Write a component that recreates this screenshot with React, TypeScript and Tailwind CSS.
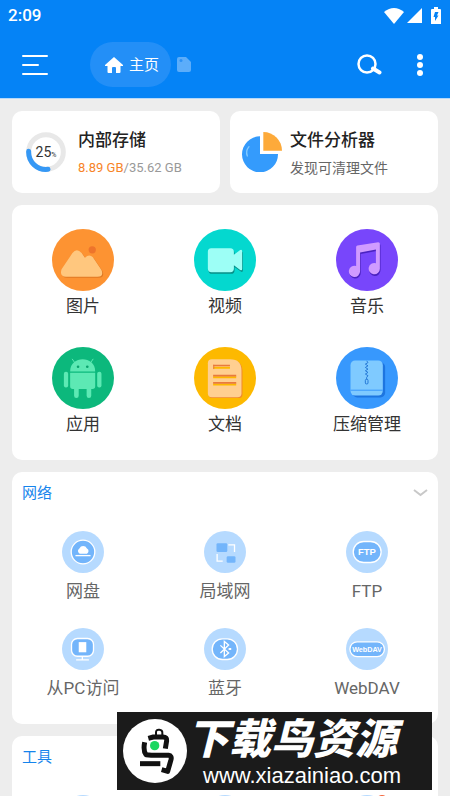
import type { ReactNode } from "react";

type Item = { label: string; icon: ReactNode };

function Disc({ color, children }: { color: string; children?: ReactNode }) {
  return (
    <svg viewBox="0 0 188 188" className="size-[62px]" aria-hidden="true">
      <circle cx="94" cy="94" r="94" fill={color} />
      {children}
    </svg>
  );
}

function PaleDisc({ children }: { children?: ReactNode }) {
  return (
    <svg viewBox="0 0 128 128" className="size-[42px]" aria-hidden="true">
      <circle cx="64" cy="64" r="64" fill="#b6daff" />
      {children}
    </svg>
  );
}

const mountain =
  "M29 122 62 73Q75 56 90 73L100 87Q113 74 124 86L150 124Q158 145 138 145H42Q22 143 29 122Z";
const camera =
  "M52 58H110Q121 58 121 69V78L140 64Q146 61 146 68V121Q146 128 140 124L121 110V120Q121 131 110 131H53Q42 131 42 120V69Q42 58 52 58Z";
const note =
  "M61 55Q61 51 65 50L128 40Q133 40 133 45V120A17 17 0 1 1 121 104V62L73 71V128A17 17 0 1 1 61 112Z";
const sheet =
  "M54 37H110Q144 37 144 72V140Q144 152 132 152H54Q42 152 42 140V49Q42 37 54 37Z";

const categories: Item[] = [
  {
    label: "图片",
    icon: (
      <Disc color="#fd9332">
        <circle cx="122" cy="63" r="11" fill="#ee742b" />
        <path d={mountain} fill="#e07a25" transform="translate(3 3)" />
        <path d={mountain} fill="#ffc77e" />
      </Disc>
    ),
  },
  {
    label: "视频",
    icon: (
      <Disc color="#04d8cf">
        <path d={camera} fill="#078f88" transform="translate(2 5)" />
        <path d={camera} fill="#9dfff6" />
      </Disc>
    ),
  },
  {
    label: "音乐",
    icon: (
      <Disc color="#7846fb">
        <path d={note} fill="#4b22c0" transform="translate(2 5)" />
        <path d={note} fill="#d09bff" />
      </Disc>
    ),
  },
  {
    label: "应用",
    icon: (
      <Disc color="#0cb87c">
        <g fill="#5de9b4">
          <path d="M55 74C55 25 131 25 131 74Z" />
          <path d="M55 78H131V119Q131 127 123 127H119V148A7 7 0 0 1 105 148V127H81V148A7 7 0 0 1 67 148V127H63Q55 127 55 119Z" />
          <rect x="36" y="75" width="13" height="48" rx="6" />
          <rect x="137" y="75" width="13" height="48" rx="6" />
        </g>
        <path d="M61 36 70 49M125 36 116 49" stroke="#5de9b4" strokeWidth="3" />
        <circle cx="79" cy="60" r="4" fill="#0aa36d" />
        <circle cx="107" cy="60" r="4" fill="#0aa36d" />
      </Disc>
    ),
  },
  {
    label: "文档",
    icon: (
      <Disc color="#fdb900">
        <path d={sheet} fill="#f08a2c" transform="translate(3 3)" />
        <path d={sheet} fill="#ffcf90" />
        <path d="M58 63H109M58 92H128M58 114H128" stroke="#fdb900" strokeWidth="6" />
        <path d="M58 56H109M58 87H128M58 109H128" stroke="#e97a3c" strokeWidth="5" />
        <path d="M60 54V67" stroke="#e97a3c" strokeWidth="3" />
      </Disc>
    ),
  },
  {
    label: "压缩管理",
    icon: (
      <Disc color="#3798fd">
        <rect x="50" y="47" width="99" height="106" rx="14" fill="#1d75e0" />
        <rect x="44" y="41" width="98" height="106" rx="14" fill="#7fcaff" />
        <path d="M44 131H142" stroke="#3798fd" strokeWidth="3" />
        <path
          d="M93 42 97 47 89 52 97 57 89 62 97 67 89 72 97 77 89 82 97 87 93 92V98"
          fill="none"
          stroke="#2377d6"
          strokeWidth="3"
        />
        <rect x="89" y="98" width="8" height="14" rx="3" fill="none" stroke="#2377d6" strokeWidth="3" />
      </Disc>
    ),
  },
];

const network: Item[] = [
  {
    label: "网盘",
    icon: (
      <PaleDisc>
        <circle cx="64" cy="64" r="36" fill="#73b5fb" stroke="#fff" strokeWidth="4" />
        <path
          d="M54 69A9 9 0 0 1 53 53A13 13 0 0 1 76 53A9 9 0 0 1 76 69Z"
          fill="#fff"
        />
        <path d="M41 75H87" stroke="#fff" strokeWidth="4" />
      </PaleDisc>
    ),
  },
  {
    label: "局域网",
    icon: (
      <PaleDisc>
        <rect x="38" y="37" width="33" height="27" rx="4" fill="#73b5fb" />
        <rect x="69" y="77" width="27" height="20" rx="4" fill="#73b5fb" />
        <path d="M40 70V92H57M74 42H93V64" fill="none" stroke="#fff" strokeWidth="4" />
      </PaleDisc>
    ),
  },
  {
    label: "FTP",
    icon: (
      <PaleDisc>
        <rect x="22" y="32" width="85" height="64" rx="32" fill="#73b5fb" stroke="#fff" strokeWidth="4" />
        <text
          x="64"
          y="74"
          textAnchor="middle"
          fill="#fff"
          className="font-['Liberation_Sans',sans-serif] text-[29px] font-bold"
        >
          FTP
        </text>
      </PaleDisc>
    ),
  },
  {
    label: "从PC访问",
    icon: (
      <PaleDisc>
        <rect x="29" y="32" width="67" height="54" rx="18" fill="#73b5fb" stroke="#fff" strokeWidth="4" />
        <rect x="51" y="43" width="23" height="31" fill="#fff" />
        <path d="M62 86V97M43 97H82" stroke="#fff" strokeWidth="4" />
      </PaleDisc>
    ),
  },
  {
    label: "蓝牙",
    icon: (
      <PaleDisc>
        <rect x="25" y="33" width="77" height="63" rx="31" fill="#73b5fb" stroke="#fff" strokeWidth="4" />
        <path d="M50 53 75 76 62 87V41L75 52 50 76" fill="none" stroke="#fff" strokeWidth="4" />
        <path d="M75 64H83" stroke="#fff" strokeWidth="6" />
      </PaleDisc>
    ),
  },
  {
    label: "WebDAV",
    icon: (
      <PaleDisc>
        <rect x="12" y="42" width="105" height="45" rx="22" fill="#73b5fb" stroke="#fff" strokeWidth="4" />
        <text
          x="64"
          y="72"
          textAnchor="middle"
          fill="#fff"
          className="font-['Liberation_Sans',sans-serif] text-[22px] font-bold"
        >
          WebDAV
        </text>
      </PaleDisc>
    ),
  },
];

function StatusBar() {
  return (
    <div className="flex h-[31px] items-center justify-between pr-[9px] pl-2">
      <span className="text-[17px] leading-[31px] font-medium">2:09</span>
      <div className="flex items-center gap-[3px]" aria-hidden="true">
        <svg viewBox="0 0 20 16" className="h-4 w-5" fill="currentColor">
          <path d="M0 4Q10-4 20 4L10 16Z" />
        </svg>
        <svg viewBox="0 0 15 15" className="size-[15px]" fill="currentColor">
          <path d="M15 0V15H0Z" />
        </svg>
        <svg viewBox="0 0 10 17" className="ml-1.5 h-[17px] w-2.5">
          <path d="M3 0H7V2H9Q10 2 10 3V17H0V3Q0 2 1 2H3Z" fill="#fff" />
          <path d="M4 5H7.500L6 8.500H7.500L4 14V10H2.500Z" fill="#0583f6" />
        </svg>
      </div>
    </div>
  );
}

function AppBar() {
  return (
    <nav className="flex h-[67px] items-center pr-5 pl-[22px]">
      <button aria-label="Menu">
        <svg viewBox="0 0 26 20" className="h-5 w-[26px]" stroke="currentColor" strokeWidth="2" strokeLinecap="round">
          <path d="M1 1H25M1 10H16M1 19H25" />
        </svg>
      </button>
      <button className="ml-[42px] flex h-[45px] items-center gap-1.5 rounded-full bg-[#238ff7] pr-3 pl-[15px]">
        <svg viewBox="0 0 18 16" className="h-4 w-[18px]" fill="currentColor" aria-hidden="true">
          <path d="M9 0 18 8V9H15.500V15Q15.500 16 14.500 16H11V11Q11 10 10 10H8Q7 10 7 11V16H3.500Q2.500 16 2.500 15V9H0V8Z" />
        </svg>
        <span className="text-[15px] leading-5">主页</span>
      </button>
      <svg viewBox="0 0 14 15" className="ml-1.5 h-[15px] w-3.5" aria-hidden="true">
        <path d="M2 0H9L14 5V13Q14 15 12 15H2Q0 15 0 13V2Q0 0 2 0Z" fill="#5cadfa" />
        <circle cx="4" cy="3.500" r="1.500" fill="#2c91f5" />
      </svg>
      <button aria-label="Search" className="ml-auto">
        <svg viewBox="0 0 25 21" className="h-[21px] w-[25px]" fill="none" stroke="currentColor">
          <circle cx="10" cy="10" r="8.500" strokeWidth="2.500" />
          <path d="M16 14.500 22.500 18.500" strokeWidth="4" strokeLinecap="round" />
        </svg>
      </button>
      <button aria-label="More" className="ml-7 w-5">
        <svg viewBox="0 0 6 22" className="mx-auto h-[22px] w-1.5" fill="currentColor">
          <circle cx="3" cy="3" r="3" />
          <circle cx="3" cy="11" r="3" />
          <circle cx="3" cy="19" r="3" />
        </svg>
      </button>
    </nav>
  );
}

function StorageRing() {
  return (
    <div className="relative size-10 shrink-0">
      <svg viewBox="0 0 120 120" className="size-10" fill="none" strokeWidth="15" aria-hidden="true">
        <circle cx="60" cy="60" r="52" stroke="#e8e8e8" />
        <path d="M66 112A52 52 0 0 1 8 58" stroke="#3598f5" strokeLinecap="round" />
      </svg>
      <div className="absolute inset-0 flex items-baseline justify-center text-[14px] leading-10 text-[#333]">
        25<span className="text-[7px]">%</span>
      </div>
    </div>
  );
}

function PieIcon() {
  return (
    <svg viewBox="0 0 120 120" className="size-10 shrink-0" aria-hidden="true">
      <path d="M54 13V66H108A54 54 0 1 1 54 13Z" fill="#349bfc" />
      <path d="M64 0A56 56 0 0 1 120 56H64Z" fill="#fdaa3a" />
      <path d="M21 44Q10 57 16 72" fill="none" stroke="#83cbff" strokeWidth="4" strokeLinecap="round" />
    </svg>
  );
}

function NetworkGrid({ items }: { items: Item[] }) {
  return (
    <div className="grid grid-cols-3 gap-y-[27px]">
      {items.map((item) => (
        <button key={item.label} className="flex flex-col items-center gap-2 text-[#666]">
          {item.icon}
          <span className="text-[17px] leading-5">{item.label}</span>
        </button>
      ))}
    </div>
  );
}

function ToolsGrid() {
  return (
    <div className="grid grid-cols-3 justify-items-center">
      <PaleDisc />
      <PaleDisc />
      <div className="relative">
        <PaleDisc />
        <span className="absolute top-0 right-0 size-3 rounded-full bg-[#f4653b]" />
      </div>
    </div>
  );
}

function Banner() {
  return (
    <aside className="absolute right-[18px] bottom-2.5 flex h-[78px] w-[315px] items-center bg-[#1b1b1b] pl-1.5 text-white">
      <svg viewBox="0 0 192 192" className="size-16 shrink-0" aria-hidden="true">
        <circle cx="96" cy="96" r="96" fill="#fff" />
        <g fill="none" stroke="#111" strokeWidth="15" strokeLinejoin="round">
          <path d="M76 58 91 54H120Q133 54 131 65L127 89" />
          <path d="M65 70Q60 96 69 107L85 109H137Q147 110 144 122L134 157 116 152" />
          <path d="M51 134H112" />
          <path d="M99 51V40Q99 31 109 32Q119 33 118 43V51" strokeWidth="6" />
        </g>
        <circle cx="95" cy="80" r="14" fill="#1bd760" />
      </svg>
      <div className="flex flex-1 flex-col gap-1 self-stretch pt-2">
        <strong className="font-['Liberation_Sans','Noto_Sans_CJK_SC',sans-serif] text-[42px] leading-10 font-black whitespace-nowrap italic">
          下载鸟资源
        </strong>
        <a href="#" className="pl-4 font-['Liberation_Sans',sans-serif] text-[22px] leading-6">
          www.xiazainiao.com
        </a>
      </div>
    </aside>
  );
}

export default function App() {
  return (
    <div className="relative flex h-screen flex-col bg-white pb-1 font-[Roboto,'Noto_Sans_CJK_SC',sans-serif]">
      <header className="shrink-0 border-b border-[#b5d8fa] bg-[#0583f6] text-white">
        <StatusBar />
        <AppBar />
      </header>

      <main className="flex min-h-0 flex-1 flex-col gap-3 overflow-hidden bg-[#ededed] p-3">
        <div className="grid shrink-0 grid-cols-2 gap-2.5">
          <button className="flex h-[82px] items-center gap-3 rounded-[10px] bg-white px-3.5 text-left">
            <StorageRing />
            <span className="pt-[3px] whitespace-nowrap">
              <span className="block text-[17px] leading-7 font-medium text-[#222]">内部存储</span>
              <span className="block text-[13px] leading-7 text-[#999]">
                <span className="text-[#f78428]">8.89 GB</span>/35.62 GB
              </span>
            </span>
          </button>
          <button className="flex h-[82px] items-center gap-2 rounded-[10px] bg-white px-3 text-left">
            <PieIcon />
            <span className="pt-[3px] whitespace-nowrap">
              <span className="block text-[17px] leading-7 font-medium text-[#222]">文件分析器</span>
              <span className="block text-[14px] leading-7 text-[#666]">发现可清理文件</span>
            </span>
          </button>
        </div>

        <section className="grid shrink-0 grid-cols-3 gap-y-[30px] rounded-[10px] bg-white pt-6 pb-[25px]">
          {categories.map((item) => (
            <button key={item.label} className="flex flex-col items-center gap-1 text-[#333]">
              {item.icon}
              <span className="text-[17px] leading-[22px]">{item.label}</span>
            </button>
          ))}
        </section>

        <section className="shrink-0 rounded-[10px] bg-white pb-[26px]">
          <div className="mb-[17px] flex h-[42px] items-center justify-between px-2.5">
            <h2 className="text-[15px] text-[#1584ec]">网络</h2>
            <button aria-label="Collapse">
              <svg viewBox="0 0 15 8" className="h-2 w-[15px]" fill="none" stroke="#c8c8c8" strokeWidth="2">
                <path d="M1 1 7.500 6 14 1" />
              </svg>
            </button>
          </div>
          <NetworkGrid items={network} />
        </section>

        <section className="shrink-0 rounded-[10px] bg-white">
          <div className="mb-[17px] flex h-[42px] items-center px-2.5">
            <h2 className="text-[15px] text-[#1584ec]">工具</h2>
          </div>
          <ToolsGrid />
        </section>
      </main>

      <Banner />
    </div>
  );
}
